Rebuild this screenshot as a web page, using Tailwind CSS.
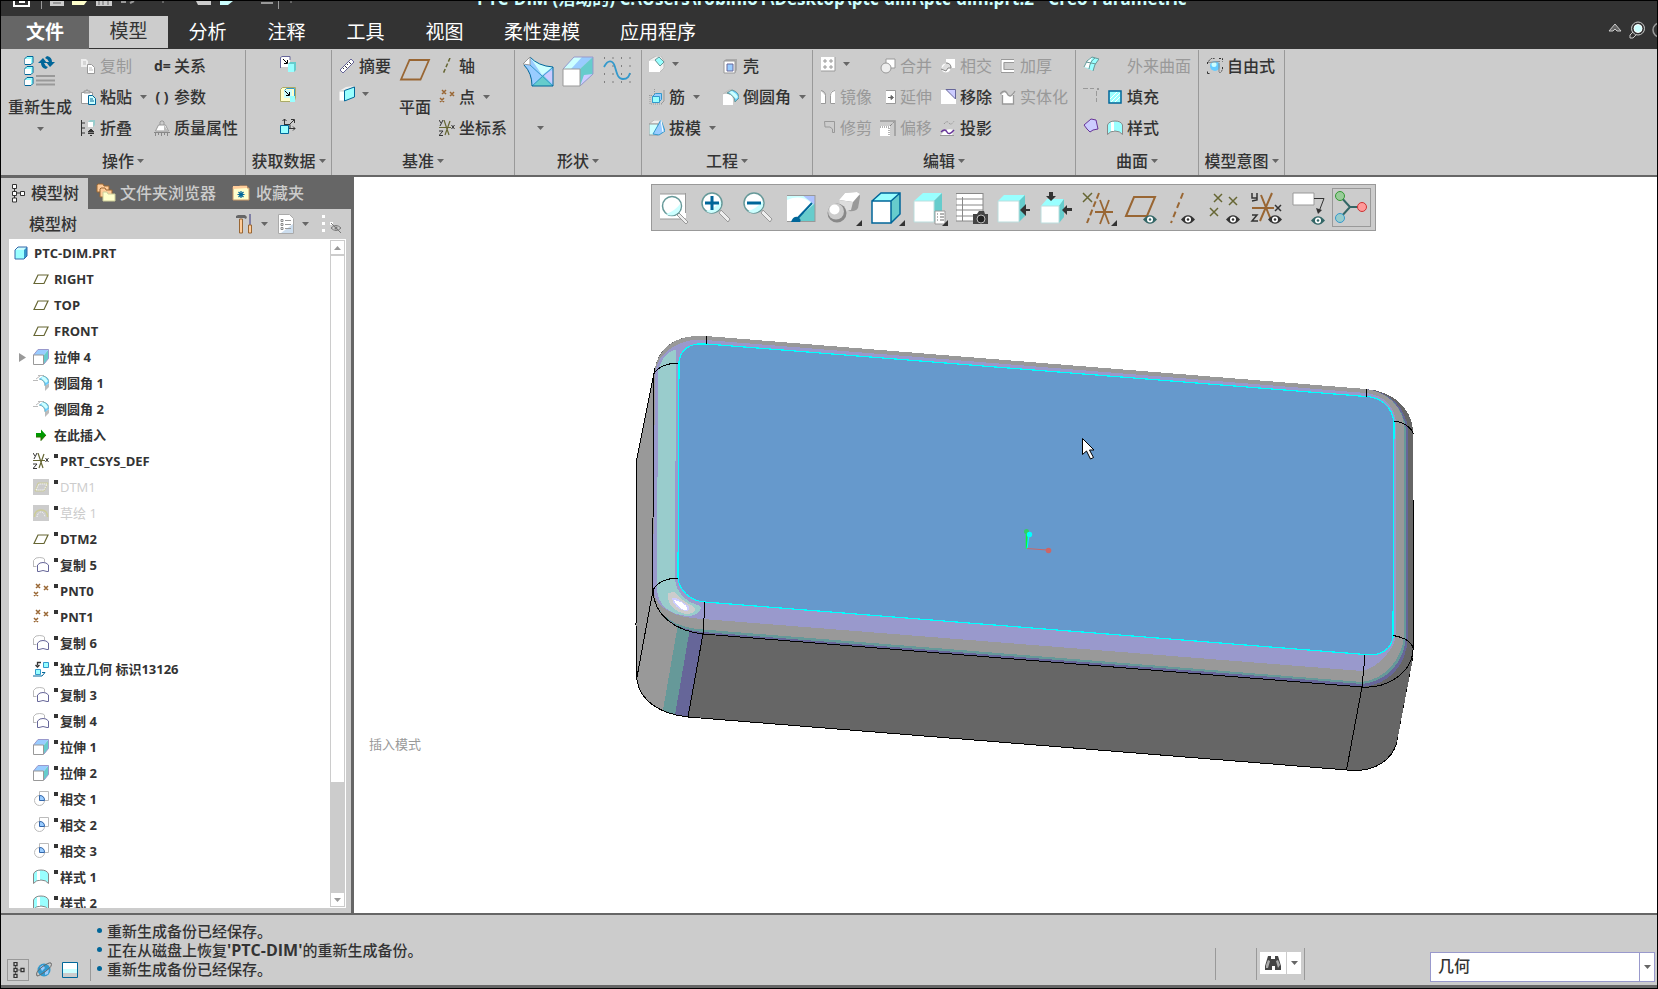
<!DOCTYPE html>
<html lang="zh-CN">
<head>
    <meta charset="UTF-8">
    <meta name="viewport" content="width=device-width, initial-scale=1.0">
    <title>PTC-DIM - Creo Parametric</title>
    <script src="https://cdn.jsdelivr.net/npm/@tailwindcss/browser@4"></script>
</head>
<body class="flex h-screen flex-col overflow-hidden bg-black p-px font-['Open_Sans','Noto_Sans_CJK_SC',sans-serif] text-base font-medium leading-6 text-[#333]">

    <!-- Icon library -->
    <svg class="hidden" xmlns="http://www.w3.org/2000/svg">
        <symbol id="caret" viewBox="0 0 7 4"><path d="M0 0h7L3.500 4z" fill="#666"/></symbol>
        <symbol id="eye" viewBox="0 0 14 9"><path d="M0 4.500Q7-4 14 4.500Q7 13 0 4.500z" fill="currentColor"/><circle cx="7" cy="4.500" r="3" fill="#fff"/><circle cx="7" cy="4.500" r="1.300" fill="currentColor"/></symbol>

        <symbol id="regen" viewBox="0 0 32 32">
            <g stroke="#069" fill="#9ff"><path d="M1 3.500l2-2h6v6l-2 2H1z"/><path d="M1 13.500l2-2h6v6l-2 2H1z"/><path d="M1 24.500l2-2h6v6l-2 2H1z"/></g>
            <path d="M1 4h6v5H1zM1 14h6v5H1zM1 25h6v5H1z" fill="#fff"/>
            <path d="M12 21h19M12 25.500h19M12 29.500h19" stroke="#999" stroke-width="2"/>
            <path d="M14 8l5-5 4 5h-3q1 3 4 4l-2 2q-5-1-5-6zM31 7l-5 5-4-5h3q-1-3-4-4l2-2q5 1 5 6z" fill="#069"/>
        </symbol>
        <symbol id="copy" viewBox="0 0 16 16"><path d="M1 1h5l2 2v6H1z" fill="#eee"/><path d="M3 4h3M3 6h3" stroke="#bbb"/><path d="M7.500 6.500h4l3 3v6h-7z" fill="#fff" stroke="#999"/><path d="M9 10h3M9 12h4" stroke="#bbb"/></symbol>
        <symbol id="paste" viewBox="0 0 16 16"><path d="M1.500 3.500h11v11h-11z" fill="#fff" stroke="#999"/><path d="M4 4V2h2l1-1.500L8 2h2v2z" fill="#ccc" stroke="#999"/><path d="M8.500 6.500h4l3 3v6h-7z" fill="#cff" stroke="#069"/><path d="M10 10h3M10 12h4" stroke="#069"/></symbol>
        <symbol id="collapse" viewBox="0 0 16 16"><path d="M1.500 0v16M2 3h3M2 8h3M2 13h3" stroke="#333"/><path d="M8 2l2-2h5v5l-2 2H8z" fill="#9cc"/><path d="M8 2h5v5H8z" fill="#fff"/><path d="M11 9l3 3H8zM8 13.500h6M10 15.500h2" fill="#333" stroke="#333"/></symbol>
        <symbol id="mass" viewBox="0 0 16 16"><path d="M1.500 11l3-6h7l3 6z" fill="#fff" stroke="#999"/><path d="M6 5V2l1-1h2l1 1v3" fill="none" stroke="#999"/><path d="M10 5l4 6h-4z" fill="#bbb"/><path d="M0 12.500h16M1.500 13v3M4.500 13v2M7.500 13v3M10.500 13v2M13.500 13v3" stroke="#888"/></symbol>
        <symbol id="userdef" viewBox="0 0 16 16"><path d="M1 1l1-1h8v9l-2 2H1z" fill="#fff"/><path d="M.5 12V1.500L2 .5h8V4" fill="none" stroke="#669"/><path d="M3 3l4 4M7.500 4v3.500H4" stroke="#000" fill="none"/><path d="M8 8l2-2h6v8l-2 2z" fill="#6cc"/><path d="M8 8h6v8H8z" fill="#9ff"/></symbol>
        <symbol id="copygeom" viewBox="0 0 16 16"><path d="M.5 2.500l2-2h13v11l-2 3H.5z" fill="#ffc" stroke="#aa6"/><path d="M4 3h8v8H4z" fill="#cff"/><path d="M4.500 3.500l2-2h8v9" fill="none" stroke="#39c"/><path d="M5 4l4 4M9.500 5v3.500H6" stroke="#000" fill="none"/><path d="M10 9h5v6h-5z" fill="#9ff"/></symbol>
        <symbol id="shrink" viewBox="0 0 16 16"><path d="M.5 7.500h8v8h-8z" fill="#9ff" stroke="#069"/><path d="M4.500 7V1M2.500 3l2-2 2 2M9 7l5-5M11 1.500h3.500V5M9 10.500h6M13 8.500l2 2-2 2M4 6.500h6v4" stroke="#333" fill="none"/></symbol>
        <symbol id="ruler" viewBox="0 0 16 16"><path d="M1 12L12 1l3 3L4 15z" fill="#fff" stroke="#669"/><path d="M4 10l1 1M6 8l2 2M8 6l1 1M10 4l2 2" stroke="#333"/></symbol>
        <symbol id="boxface" viewBox="0 0 16 16"><path d="M0 5l7-4 8-1-7 4z" fill="#eee"/><path d="M0 5h6v10H0z" fill="#fff" stroke="#ccc"/><path d="M5.500 4.500l10-3.500v10l-10 4z" fill="#9ff" stroke="#069"/></symbol>
        <symbol id="plane" viewBox="0 0 32 32"><path d="M2 25.500L10.500 6H30L21.500 25.500z" fill="none" stroke="#963" stroke-width="1.800"/></symbol>
        <symbol id="axis" viewBox="0 0 16 16"><path d="M11 0L4 16" stroke="#663" stroke-width="1.500" stroke-dasharray="4 2"/></symbol>
        <symbol id="points" viewBox="0 0 16 16"><path d="M3 1l4 4M7 1L3 5M11 3l4 4M15 3l-4 4M1 9l4 4M5 9l-4 4" stroke="currentColor" stroke-width="1.500"/></symbol>
        <symbol id="csys" viewBox="0 0 16 16"><path d="M0 7.500h12M5 0l5 15M11 1L6 15" stroke="#663" stroke-width="1.200"/><path d="M0 0l2 3M4 0L1 6M0 11h4l-4 4.500h4M12.500 5l3 4M15.500 5l-3 4" fill="none" stroke="#333"/></symbol>
        <symbol id="blend" viewBox="0 0 32 32"><path d="M8 1q8 9 23 10v19H10Q10 17 2 9z" fill="#9cf"/><path d="M8 1q8 9 23 10L20 19z" fill="#cff"/><path d="M10 30l11-11 10 11z" fill="#6cc"/><path d="M21 19l10-5v14z" fill="#ccf"/><path d="M8 9l23 21M10 30L31 11" stroke="#39c"/><path d="M8 1q8 9 23 10v19H10Q10 17 2 9" fill="none" stroke="#069"/><path d="M1 8l7-7v8z" fill="#fff" stroke="#999"/></symbol>
        <symbol id="extrude" viewBox="0 0 32 32"><path d="M1 13L12 1h19L18 13z" fill="#9cf"/><path d="M1 13L12 1h8L9 13z" fill="#cff"/><path d="M18 13L31 1v17L18 30z" fill="#6cc"/><path d="M18 30l4-11 9-1z" fill="#ccf"/><path d="M1 13L12 1h19v17L18 30" fill="none" stroke="#99c"/><path d="M1 13h17v17H1z" fill="#fff" stroke="#999"/></symbol>
        <symbol id="extrudeitem" viewBox="0 0 16 16"><path d="M.5 6L5 .5h10.500L11 6z" fill="#9cf"/><path d="M11 6l4.500-5.500v9L11 15z" fill="#6cc"/><path d="M.5 6L5 .5h10.500v9L11 15" fill="none" stroke="#99c"/><path d="M.5 6h10v9.500H.5z" fill="#fff" stroke="#999"/></symbol>
        <symbol id="sketch" viewBox="0 0 32 32"><path d="M2 2h28M2 10h28M2 18h28M2 26h28" stroke="#333" stroke-dasharray="1 7.500"/><path d="M2 11c4-8 9-7 11 0s3 12 8 12 6-3 7-6" fill="none" stroke="#39c" stroke-width="1.800"/></symbol>
        <symbol id="chamfer" viewBox="0 0 16 16"><path d="M0 4l7-4h5l3 5v7l-4 4H0z" fill="#eee" stroke="#bbb"/><path d="M0 5h6l5 5v6H0z" fill="#fff"/><path d="M6 4l4-3 5 5-4 4z" fill="#9ff" stroke="#699"/></symbol>
        <symbol id="rib" viewBox="0 0 16 16"><path d="M5.500 0v6M0 6.500h5M1 6v9h12" fill="none" stroke="#999" stroke-dasharray="1 1"/><path d="M3.500 7.500l3-3h6v6l-3 3h-6z" fill="#9cf" stroke="#39c"/><path d="M3.500 7.500h7v6h-7z" fill="#9ff" stroke="#39c"/><path d="M15 1v11l-3 3" fill="none" stroke="#999"/></symbol>
        <symbol id="draft" viewBox="0 0 16 16"><path d="M0 4l5-4h7L9 4z" fill="#eee" stroke="#bbb"/><path d="M0 4h9v11H0z" fill="#cff" stroke="#999"/><path d="M8 7l4-7 4 11-6 4-6-1z" fill="#9cf" stroke="#39c"/><path d="M12 0l2 12" stroke="#fff"/></symbol>
        <symbol id="shell" viewBox="0 0 16 16"><path d="M1 3l2-2h11v11l-2 3z" fill="#aaa"/><path d="M1 3h11v12H1z" fill="#fff" stroke="#999"/><path d="M4 6h6v7H4z" fill="#9cf" stroke="#669"/></symbol>
        <symbol id="round" viewBox="0 0 16 16"><path d="M0 5h5q5 1 5 6v5H0z" fill="#fff"/><path d="M0 5l6-4h4" fill="none" stroke="#bbb"/><path d="M4 4l5-3q7 2 7 8l-4 4q0-7-8-9z" fill="#6cf" stroke="#699"/><path d="M6 3l3-1q4 2 6 6l-2 2z" fill="#cff"/></symbol>
        <symbol id="rounditem" viewBox="0 0 16 16"><path d="M0 5.500h5M5 .5h6M3 4l4-3" stroke="#bbb"/><path d="M12 11l4-3v4l-4 4z" fill="#bbb"/><path d="M6 4l4-3q6 1 6 7l-4 3q0-6-6-7z" fill="#6cf"/><path d="M8 3l2-2q3 1 5 5l-2 2z" fill="#cff"/><path d="M6 4q6 1 6 7M10 1q6 1 6 7" fill="none" stroke="#699" stroke-width=".7"/></symbol>
        <symbol id="pattern" viewBox="0 0 16 16"><path d="M1 1h14v14H1z" fill="#fff"/><path d="M15 1v14H1" fill="none" stroke="#999"/><path d="M4 4h2v2H4zM10 4h2v2h-2zM4 10h2v2H4zM10 10h2v2h-2z" fill="none" stroke="#999"/></symbol>
        <symbol id="mirror" viewBox="0 0 16 16"><path d="M1 2l4 4v9H1z" fill="#fff"/><path d="M1 1.500q4.500 1 4.500 5v8H1" fill="none" stroke="#999"/><path d="M15 1q-5 1-5 5v9h5z" fill="#fff"/><path d="M15 1.500q-4.500 1-4.500 5v8H15" fill="none" stroke="#999"/></symbol>
        <symbol id="trim" viewBox="0 0 16 16"><path d="M4.500 1.500h10v11h-2V9L10 7H5z" fill="#ccc" stroke="#999"/></symbol>
        <symbol id="merge" viewBox="0 0 16 16"><path d="M6 1h9v9H6z" fill="#fff" stroke="#999"/><circle cx="6" cy="10" r="5" fill="#eee" stroke="#999"/></symbol>
        <symbol id="extend" viewBox="0 0 16 16"><path d="M6 2h9v13H6z" fill="#fff"/><path d="M6 1.500h9.500v13H6" fill="none" stroke="#999"/><path d="M8 8.500h4M11 6.500l2.500 2L11 10.500z" fill="#666" stroke="#666"/></symbol>
        <symbol id="offset" viewBox="0 0 16 16"><path d="M0 1h15v15" fill="none" stroke="#999" stroke-width="1.500"/><path d="M0 6h10v10H0z" fill="#fff"/><path d="M0 7h9v9M10 6l4-4" fill="none" stroke="#666" stroke-dasharray="1 1"/></symbol>
        <symbol id="intersect" viewBox="0 0 16 16"><path d="M6 1h9v9H6z" fill="#fff"/><circle cx="6" cy="10" r="5" fill="#fff" stroke="#ccc"/><path d="M6 5q5 0 5 5H8l-2 3-5-2" fill="#ddd" stroke="#888"/></symbol>
        <symbol id="remove" viewBox="0 0 16 16"><path d="M1 1h9l6 8v6H1z" fill="#fff"/><path d="M6 .5h9.500V10z" fill="#ccf" stroke="#669"/></symbol>
        <symbol id="project" viewBox="0 0 16 16"><path d="M4 4q3-4 5-1t5-2" fill="none" stroke="#999" stroke-dasharray="2 1"/><path d="M1 15q5-8 13-5l-2 5z" fill="#fff"/><path d="M0 15.500h14" stroke="#999"/><path d="M1 12q4-4 6 0t7-2" fill="none" stroke="#639" stroke-width="1.500"/></symbol>
        <symbol id="thicken" viewBox="0 0 16 16"><path d="M14 2.500H2v11h12" fill="#ccc" stroke="#fff" stroke-width="3"/><path d="M14 1.500H1v13h13M14 4.500H4v7h10" fill="none" stroke="#999"/></symbol>
        <symbol id="solidify" viewBox="0 0 16 16"><path d="M2 5q4-4 6 1 2 4 6-1v10H2z" fill="#fff"/><path d="M0 5q5-6 8 1 3 3 7-4M2.500 6v9h11V6" fill="none" stroke="#999" stroke-width="1.300"/></symbol>
        <symbol id="boundary" viewBox="0 0 16 16"><path d="M1 11q2-7 8-10l7 2q-5 5-6 12z" fill="#9ff"/><path d="M1 11q2-7 8-10l-3 11z" fill="#fff"/><path d="M1 11q2-7 8-10l7 2q-5 5-6 12M3 6l10 2M6 13q1-8 6-11" fill="none" stroke="#699"/></symbol>
        <symbol id="corner" viewBox="0 0 16 16"><path d="M0 1.500h11M13.500 4v11" stroke="#999" stroke-dasharray="5 2"/><path d="M14 1h2v2h-2z" fill="#999"/></symbol>
        <symbol id="polygon" viewBox="0 0 16 16"><path d="M1 7l7-6 5 1 2 9-5 1-3 2-3-3z" fill="#ccf" stroke="#639"/></symbol>
        <symbol id="fill" viewBox="0 0 16 16"><path d="M2 2h12v12H2z" fill="#9ff" stroke="#069" stroke-width="1.500"/><path d="M3 10l7-7M4 13l9-9M8 13l5-5" stroke="#fff"/></symbol>
        <symbol id="style" viewBox="0 0 16 16"><path d="M.5 14.500V5Q2 1 8 1t7.500 4v9.500Q13 11 8 11T.5 14.500z" fill="#9ff" stroke="#888"/><path d="M4 2h3v9H4z" fill="#fff"/></symbol>
        <symbol id="freestyle" viewBox="0 0 16 16"><circle cx="8" cy="8" r="5" fill="#6cf"/><circle cx="7" cy="6.500" r="2.500" fill="#cff"/><path d="M.5 15.500h3M.5 15.500v-3M.5 6V4l4-3.500h3M12 .5h3.500v3M15.500 9v3l-3 3" fill="none" stroke="#333" stroke-dasharray="2 1"/><path d="M1 4.500l12-1M12 5v9" stroke="#888"/></symbol>

        <symbol id="treetab" viewBox="0 0 14 20"><path d="M3.500 5v3M3.500 12v3M6 10h4" stroke="#333"/><path d="M1.500 1.500h4v4h-4zM1.500 8.500h4v4h-4zM1.500 15h4v4h-4zM9.500 8.500h4v4h-4z" fill="#fff" stroke="#333"/></symbol>
        <symbol id="treesmall" viewBox="0 0 13 16"><path d="M3.500 4v2M3.500 10v2M5 8h4" stroke="#666"/><path d="M2 .5h3v3H2zM2 6.500h3v3H2zM2 12.500h3v3H2zM9 6.500h3v3H9z" fill="#fff" stroke="#333" stroke-width="1.300"/></symbol>
        <symbol id="folders" viewBox="0 0 20 20"><g stroke="#963" fill="#fc9"><path d="M1 9V2l1-1h5l1 2h5v6z"/><path d="M4 14V6l1-1h4l1 2h6v7z"/></g><path d="M7 18v-9h4l1 2h7v7z" fill="#ffc" stroke="#cc9"/></symbol>
        <symbol id="favs" viewBox="0 0 18 18"><path d="M1 16V3h5l2-1h7v2h2v12z" fill="#ffc" stroke="#c96"/><path d="M1 5V2h14v2" fill="#fc9"/><path d="M9 7v7M5.500 10.500h7M6.500 8l5 5M11.500 8l-5 5" stroke="#069" stroke-width="1.200"/></symbol>
        <symbol id="tools" viewBox="0 0 18 20"><path d="M1 2l2-1h7l2 2-1 2-2-1H1z" fill="#666"/><path d="M4.500 5h3v14h-3z" fill="#fc9" stroke="#963"/><path d="M15 0v11" stroke="#669" stroke-width="1.500"/><path d="M13.500 11h3v8h-3z" fill="#fc9" stroke="#963"/></symbol>
        <symbol id="listdoc" viewBox="0 0 16 20"><path d="M.5.500h11l4 4v15H.5z" fill="#fff" stroke="#aaa"/><path d="M3 19l12-9v9z" fill="#cde"/><path d="M7 6.500h6M7 10.500h6M7 14.500h6" stroke="#999"/><path d="M3 5.500h2v2H3zM3 9.500h2v2H3zM3 13.500h2v2H3z" fill="none" stroke="#888"/></symbol>
        <symbol id="filter" viewBox="0 0 20 20"><path d="M1 1h3v3H1zM1 8h3v3H1zM1 15h3v3H1zM9 8h3v3H9z" fill="#fff"/><path d="M10 14q5-5 10 0-5 5-10 0zM10 9l10 10" fill="none" stroke="#777"/><circle cx="15" cy="14" r="1.500" fill="#777"/></symbol>

        <symbol id="part" viewBox="0 0 14 14"><path d="M1 4l3-3h9v9l-3 3z" fill="#39c"/><path d="M1 4l3-3h9l-3 3z" fill="#cff"/><path d="M1 4h9v9H1z" fill="#9ff"/><path d="M1 4l3-3h9v9l-3 3H1z" fill="none" stroke="#36a"/></symbol>
        <symbol id="datum" viewBox="0 0 16 16"><path d="M1 12.500L5 4h10l-4 8.500z" fill="none" stroke="#663" stroke-width="1.200"/></symbol>
        <symbol id="insert" viewBox="0 0 16 16"><path d="M3 6h5V2.500L13 8l-5 5.500V10H3z" fill="#090"/><path d="M3 10h5v3.500L13 8" fill="none" stroke="#360"/></symbol>
        <symbol id="datumhid" viewBox="0 0 16 16"><path d="M0 0h16v16H0z" fill="#ccc"/><path d="M2 12L5 4h10l-4 8z" fill="none" stroke="#cc9"/><path d="M3 11L6 5h8l-3 6z" fill="none" stroke="#fff" stroke-dasharray="1 1"/></symbol>
        <symbol id="sketchhid" viewBox="0 0 16 16"><path d="M0 0h16v16H0z" fill="#ccc"/><path d="M1.500 12q0-7 6.500-7t6.500 7" fill="none" stroke="#cc9" stroke-width="1.500"/><path d="M4 12q1-5 4-5t4 5" fill="none" stroke="#fff" stroke-dasharray="1 1"/></symbol>
        <symbol id="copyitem" viewBox="0 0 16 16"><path d="M.5 10V3.500L3 1q4-1 7 0l1.500 1v3M.5 9.500h3" fill="none" stroke="#bbb"/><path d="M4.500 14.500V8L7 6q3-1 6 0l2.500 2v6.500H14q-4-2-8 0z" fill="#fff" stroke="#669"/></symbol>
        <symbol id="indep" viewBox="0 0 16 16"><path d="M10.500 1.500h5v5h-5z" fill="#9ff" stroke="#39c"/><path d="M8 1.500H4.500v3M2.500 4l2 2 2-2" fill="none" stroke="#333" stroke-width="1.300"/><path d="M2.500 8.500h5v5h-5z" fill="#9ff" stroke="#39c"/><path d="M0 15h9l3-3.500H9" fill="none" stroke="#069"/></symbol>
        <symbol id="intitem" viewBox="0 0 16 16"><path d="M6.500.500h9v9h-9z" fill="#fff" stroke="#bbb"/><circle cx="6.500" cy="9.500" r="5" fill="#fff" stroke="#bbb"/><path d="M6.500 4.500q5 0 5 5h-5z" fill="#9cf" stroke="#36a"/></symbol>

        <symbol id="lens" viewBox="0 0 40 34"><path d="M23 19l9 9-2 3-9-9z" fill="#eee" stroke="#999"/><circle cx="14" cy="12" r="10" fill="#fff" stroke="#699" stroke-width="1.500"/><path d="M8 20q8-2 15-10 1 7-4 10-6 4-11 0z" fill="#cff"/></symbol>
    </svg>

    <!-- Title bar and ribbon tabs -->
    <header class="flex h-12 shrink-0 flex-col bg-[#333] text-white">
        <div class="relative flex h-2 shrink-0 items-end overflow-hidden pl-[476px]">
            <svg class="absolute top-0 left-0 h-2 w-[300px]" viewBox="0 0 300 8">
                <path d="M13 0v5h15V0" fill="none" stroke="#fff" stroke-width="2"/><path d="M18 1h6" stroke="#fff" stroke-width="2"/><path d="M40.500 0v10M277.500 0v10" stroke="#999"/>
                <path d="M49 0h14v5H49zM95 0h16v5H95z" fill="#ccc"/><path d="M71 0h15l-3 4H71z" fill="#ffc"/><path d="M98 0v4M102 0v4M107 0v4M52 2h8" stroke="#666"/><path d="M195 0h15v4h-13z" fill="#ccc"/><path d="M219 4h8l5-4h-13z" fill="#cff"/><path d="M120 1h5M129 2l4-2M260 2h12" stroke="#999" stroke-width="2" fill="none"/><path d="M161 1h2M289 1h2" stroke="#999"/>
            </svg>
            <h1 class="whitespace-nowrap text-[17px] leading-5 font-bold text-[#cff]">PTC-DIM (活动的) C:\Users\robinlo1\Desktop\ptc-dim\ptc-dim.prt.2 - Creo Parametric</h1>
        </div>
        <div class="mt-[7px] flex h-[33px] items-stretch text-[19px] font-normal">
            <nav class="flex">
                <button class="w-[88px] bg-[#666] pb-0.5 font-bold">文件</button>
                <button class="mb-px w-[79px] bg-[#ccc] pb-0.5 text-[#333]">模型</button>
                <button class="w-[79px] pb-0.5">分析</button>
                <button class="w-[79px] pb-0.5">注释</button>
                <button class="w-[79px] pb-0.5">工具</button>
                <button class="w-[79px] pb-0.5">视图</button>
                <button class="px-5 pb-0.5">柔性建模</button>
                <button class="px-5 pb-0.5">应用程序</button>
            </nav>
            <div class="ml-auto flex items-center gap-[7px] overflow-hidden pb-1.5">
                <button class="pb-1" aria-label="折叠功能区"><svg class="h-2.5 w-3.5" viewBox="0 0 14 10"><path d="M1 8l6-7 6 7H9L7 6 5 8z" fill="#666" stroke="#ccc"/></svg></button>
                <button aria-label="搜索"><svg class="h-[18px] w-4" viewBox="0 0 16 18"><path d="M1 17v-3l4-4 3 3-4 4z" fill="#333" stroke="#ccc"/><circle cx="9" cy="7.500" r="6.500" fill="#333" stroke="#ccc"/><circle cx="9" cy="7.500" r="4" fill="#cff" stroke="#fff"/></svg></button>
                <button aria-label="帮助"><svg class="h-4 w-[5px]" viewBox="0 0 5 16"><circle cx="8" cy="8" r="7" fill="none" stroke="#999" stroke-width="1.500"/></svg></button>
            </div>
        </div>
    </header>

    <!-- Ribbon -->
    <section class="flex h-32 shrink-0 overflow-hidden border-b-2 border-[#666] bg-[#ccc] pt-px whitespace-nowrap">
        <div class="flex w-[245px] shrink-0 flex-col border-r border-[#999]">
            <div class="flex h-24 pl-[7px]">
                <button class="flex w-16 flex-col items-center pt-[5px]"><svg class="size-8"><use href="#regen"/></svg><span class="mt-2">重新生成</span><svg class="mt-2 h-1 w-[7px]"><use href="#caret"/></svg></button>
                <div class="ml-2 flex w-[74px] flex-col">
                    <button disabled class="flex h-[31px] items-center gap-1 font-normal text-[#999]"><svg class="size-4"><use href="#copy"/></svg>复制</button>
                    <button class="flex h-[31px] items-center gap-1"><svg class="size-4"><use href="#paste"/></svg>粘贴<svg class="ml-1 h-1 w-[7px]"><use href="#caret"/></svg></button>
                    <button class="flex h-[31px] items-center gap-1"><svg class="size-4"><use href="#collapse"/></svg>折叠</button>
                </div>
                <div class="flex flex-col">
                    <button class="flex h-[31px] items-center gap-1"><span class="w-4 text-sm font-bold">d=</span>关系</button>
                    <button class="flex h-[31px] items-center gap-1"><span class="w-4 text-center text-sm font-bold">( )</span>参数</button>
                    <button class="flex h-[31px] items-center gap-1"><svg class="size-4"><use href="#mass"/></svg>质量属性</button>
                </div>
            </div>
            <button class="flex flex-1 items-center justify-center gap-[3px]">操作<svg class="h-1 w-[7px]"><use href="#caret"/></svg></button>
        </div>

        <div class="flex w-[86px] shrink-0 flex-col border-r border-[#999]">
            <div class="flex h-24 flex-col items-center pr-0.5">
                <button class="flex h-[31px] items-center pb-1" aria-label="用户定义特征"><svg class="size-4"><use href="#userdef"/></svg></button>
                <button class="flex h-[31px] items-center pb-1" aria-label="复制几何"><svg class="size-4"><use href="#copygeom"/></svg></button>
                <button class="flex h-[31px] items-center pb-1" aria-label="收缩包络"><svg class="size-4"><use href="#shrink"/></svg></button>
            </div>
            <button class="flex flex-1 items-center justify-center gap-[3px]">获取数据<svg class="h-1 w-[7px]"><use href="#caret"/></svg></button>
        </div>

        <div class="flex w-[183px] shrink-0 flex-col border-r border-[#999]">
            <div class="flex h-24 pl-[7px]">
                <div class="flex w-[60px] flex-col">
                    <button class="flex h-[31px] items-center gap-1"><svg class="size-4"><use href="#ruler"/></svg>摘要</button>
                    <button class="flex h-[26px] items-center gap-[7px]" aria-label="带"><svg class="size-4"><use href="#boxface"/></svg><svg class="h-1 w-[7px]"><use href="#caret"/></svg></button>
                </div>
                <button class="flex w-8 flex-col items-center pt-1"><svg class="size-8"><use href="#plane"/></svg><span class="mt-[9px]">平面</span></button>
                <div class="ml-2 flex flex-col">
                    <button class="flex h-[31px] items-center gap-1"><svg class="size-4"><use href="#axis"/></svg>轴</button>
                    <button class="flex h-[31px] items-center gap-1"><svg class="size-4 text-[#963]"><use href="#points"/></svg>点<svg class="ml-1 h-1 w-[7px]"><use href="#caret"/></svg></button>
                    <button class="flex h-[31px] items-center gap-1"><svg class="size-4"><use href="#csys"/></svg>坐标系</button>
                </div>
            </div>
            <button class="flex flex-1 items-center justify-center gap-[3px]">基准<svg class="h-1 w-[7px]"><use href="#caret"/></svg></button>
        </div>

        <div class="flex w-[127px] shrink-0 flex-col border-r border-[#999]">
            <div class="flex h-24 items-start gap-2 pt-1.5 pl-[7px]">
                <button class="flex flex-col items-center" aria-label="边界混合"><svg class="size-8"><use href="#blend"/></svg><svg class="mt-[38px] ml-1 h-1 w-[7px]"><use href="#caret"/></svg></button>
                <button aria-label="拉伸"><svg class="size-8"><use href="#extrude"/></svg></button>
                <button aria-label="草绘"><svg class="size-8"><use href="#sketch"/></svg></button>
            </div>
            <button class="flex flex-1 items-center justify-center gap-[3px]">形状<svg class="h-1 w-[7px]"><use href="#caret"/></svg></button>
        </div>

        <div class="flex w-[171px] shrink-0 flex-col border-r border-[#999]">
            <div class="flex h-24 pl-[7px]">
                <div class="flex w-[74px] flex-col">
                    <button class="flex h-[31px] items-center gap-[7px] pb-1" aria-label="倒角"><svg class="size-4"><use href="#chamfer"/></svg><svg class="h-1 w-[7px]"><use href="#caret"/></svg></button>
                    <button class="flex h-[31px] items-center gap-1"><svg class="size-4"><use href="#rib"/></svg>筋<svg class="ml-1 h-1 w-[7px]"><use href="#caret"/></svg></button>
                    <button class="flex h-[31px] items-center gap-1"><svg class="size-4"><use href="#draft"/></svg>拔模<svg class="ml-1 h-1 w-[7px]"><use href="#caret"/></svg></button>
                </div>
                <div class="flex flex-col">
                    <button class="flex h-[31px] items-center gap-1"><svg class="size-4"><use href="#shell"/></svg>壳</button>
                    <button class="flex h-[31px] items-center gap-1"><svg class="size-4"><use href="#round"/></svg>倒圆角<svg class="ml-1 h-1 w-[7px]"><use href="#caret"/></svg></button>
                </div>
            </div>
            <button class="flex flex-1 items-center justify-center gap-[3px]">工程<svg class="h-1 w-[7px]"><use href="#caret"/></svg></button>
        </div>

        <div class="flex w-[263px] shrink-0 flex-col border-r border-[#999]">
            <div class="flex h-24 gap-2 pl-[7px] font-normal text-[#999]">
                <div class="flex flex-col">
                    <button class="flex h-[31px] items-center gap-[7px] pb-1" aria-label="阵列"><svg class="size-4"><use href="#pattern"/></svg><svg class="h-1 w-[7px]"><use href="#caret"/></svg></button>
                    <button disabled class="flex h-[31px] items-center gap-1"><svg class="size-4"><use href="#mirror"/></svg>镜像</button>
                    <button disabled class="flex h-[31px] items-center gap-1"><svg class="size-4"><use href="#trim"/></svg>修剪</button>
                </div>
                <div class="flex flex-col">
                    <button disabled class="flex h-[31px] items-center gap-1"><svg class="size-4"><use href="#merge"/></svg>合并</button>
                    <button disabled class="flex h-[31px] items-center gap-1"><svg class="size-4"><use href="#extend"/></svg>延伸</button>
                    <button disabled class="flex h-[31px] items-center gap-1"><svg class="size-4"><use href="#offset"/></svg>偏移</button>
                </div>
                <div class="flex flex-col">
                    <button disabled class="flex h-[31px] items-center gap-1"><svg class="size-4"><use href="#intersect"/></svg>相交</button>
                    <button class="flex h-[31px] items-center gap-1 font-medium text-[#333]"><svg class="size-4"><use href="#remove"/></svg>移除</button>
                    <button class="flex h-[31px] items-center gap-1 font-medium text-[#333]"><svg class="size-4"><use href="#project"/></svg>投影</button>
                </div>
                <div class="flex flex-col">
                    <button disabled class="flex h-[31px] items-center gap-1"><svg class="size-4"><use href="#thicken"/></svg>加厚</button>
                    <button disabled class="flex h-[31px] items-center gap-1"><svg class="size-4"><use href="#solidify"/></svg>实体化</button>
                </div>
            </div>
            <button class="flex flex-1 items-center justify-center gap-[3px]">编辑<svg class="h-1 w-[7px]"><use href="#caret"/></svg></button>
        </div>

        <div class="flex w-[123px] shrink-0 flex-col border-r border-[#999]">
            <div class="flex h-24 gap-2 pl-[7px]">
                <div class="flex flex-col">
                    <button class="flex h-[31px] items-center pb-1" aria-label="边界混合"><svg class="size-4"><use href="#boundary"/></svg></button>
                    <button class="flex h-[31px] items-center pb-1" aria-label="顶点倒圆角"><svg class="size-4"><use href="#corner"/></svg></button>
                    <button class="flex h-[31px] items-center pb-1" aria-label="自由曲面"><svg class="size-4"><use href="#polygon"/></svg></button>
                </div>
                <div class="flex flex-col">
                    <button disabled class="flex h-[31px] items-center pl-5 font-normal text-[#999]">外来曲面</button>
                    <button class="flex h-[31px] items-center gap-1"><svg class="size-4"><use href="#fill"/></svg>填充</button>
                    <button class="flex h-[31px] items-center gap-1"><svg class="size-4"><use href="#style"/></svg>样式</button>
                </div>
            </div>
            <button class="flex flex-1 items-center justify-center gap-[3px]">曲面<svg class="h-1 w-[7px]"><use href="#caret"/></svg></button>
        </div>

        <div class="flex w-[86px] shrink-0 flex-col border-r border-[#999]">
            <div class="flex h-24 flex-col pl-2">
                <button class="flex h-[31px] items-center gap-1"><svg class="size-4"><use href="#freestyle"/></svg>自由式</button>
            </div>
            <button class="flex flex-1 items-center justify-center gap-[3px]">模型意图<svg class="h-1 w-[7px]"><use href="#caret"/></svg></button>
        </div>
    </section>

    <div class="flex min-h-0 flex-1">
        <!-- Navigator -->
        <aside class="flex w-[353px] shrink-0 flex-col border-r-[3px] border-[#666] bg-[#ccc]">
            <nav class="flex h-8 shrink-0 bg-[#666] pt-px whitespace-nowrap text-[#ccc]">
                <button class="flex w-[87px] items-center gap-1.5 bg-[#ccc] pb-0.5 pl-2.5 text-[#333]"><svg class="h-5 w-3.5"><use href="#treetab"/></svg>模型树</button>
                <button class="ml-2 flex items-center gap-1 pb-0.5"><svg class="size-5"><use href="#folders"/></svg>文件夹浏览器</button>
                <button class="ml-4 flex items-center gap-1.5 pb-0.5"><svg class="size-[18px]"><use href="#favs"/></svg>收藏夹</button>
            </nav>
            <div class="flex h-[30px] shrink-0 items-center pr-2.5 pl-7">
                <h2>模型树</h2>
                <button class="ml-auto flex items-center gap-2" aria-label="设置"><svg class="h-5 w-[18px]"><use href="#tools"/></svg><svg class="h-1 w-[7px]"><use href="#caret"/></svg></button>
                <button class="ml-2.5 flex items-center gap-2" aria-label="显示"><svg class="h-5 w-4"><use href="#listdoc"/></svg><svg class="h-1 w-[7px]"><use href="#caret"/></svg></button>
                <button class="ml-3" aria-label="过滤"><svg class="size-5"><use href="#filter"/></svg></button>
            </div>
            <div class="mr-[5px] mb-[5px] ml-2 flex min-h-0 flex-1 overflow-hidden bg-white p-px">
                <ul id="model-tree" class="min-w-0 flex-1 text-[13px] font-bold"></ul>
                <div class="flex w-[15px] flex-col border border-[#ccc]">
                    <button class="flex h-[15px] shrink-0 items-center justify-center border-b-2 border-[#ccc]" aria-label="向上滚动"><svg class="h-1 w-[7px]" viewBox="0 0 7 4"><path d="M0 4h7L3.500 0z" fill="#999"/></svg></button>
                    <div class="flex min-h-0 flex-1 items-end"><div class="h-[17.500%] w-full bg-[#ccc]"></div></div>
                    <button class="flex h-[13px] shrink-0 items-center justify-center" aria-label="向下滚动"><svg class="h-1 w-[7px]" viewBox="0 0 7 4"><path d="M0 0h7L3.500 4z" fill="#999"/></svg></button>
                </div>
            </div>
        </aside>

        <!-- Graphics window -->
        <main class="relative min-w-0 flex-1 overflow-hidden bg-white">
            <svg class="absolute inset-0 h-full w-full" viewBox="354 177 1303 736" shape-rendering="crispEdges">
                <!-- solid body -->
                <path d="M706 336H696C672 337 658 350 655 368L637 458 636 625 637 680C640 701 660 714 688 717L1347 770C1375 773 1392 760 1397 742L1413 658V430C1411 407 1392 391 1366 389z" fill="#666"/>
                <path d="M655 368L637 458 636 625 637 680C640 694 650 706 663 710L680 628 654 600z" fill="#999"/>
                <path d="M663 710L678 624 692 630 675 715z" fill="#699"/>
                <path d="M675 715L690 628 704 632 688 717z" fill="#669"/>
                <!-- rounded rim, shaded in bands -->
                <path d="M706 336H696C672 337 658 350 654 372L653 590C654 616 676 631 703 634L1362 687C1388 685 1408 666 1408 634V430C1406 407 1390 392 1366 389z" fill="#669"/>
                <path d="M706 336H696C672 337 658 350 654 372L653 590C654 616 676 630 703 632L1362 684C1386 682 1406 662 1406 634V430C1404 407 1388 392 1366 389z" fill="#699"/>
                <path d="M706 336H696C672 337 658 350 654 372L653 590C654 616 676 628 703 629.500L1362 682C1384 680 1404 658 1404 634V425C1402 405 1386 392 1366 389z" fill="#999"/>
                <path d="M706 340H696C680 340 658 352 655 372L653 590C656 609 676 618 703 619L1362 671C1378 668 1396 648 1396 634V422C1394 406 1384 395 1366 393z" fill="#99c"/>
                <path d="M676 350C668 350 660 360 658 372L657 590C658 605 670 615 688 616C697 616 703 610 700 606C685 602 676 592 675 580z" fill="#9cc"/>
                <path d="M668 593C666 602 674 613 687 614C696 614 698 609 691 605C682 601 678 595 674 592z" fill="#ccc"/>
                <path d="M672 598C672 604 680 612 688 611C692 609 688 605 684 603C679 600 676 597 672 598z" fill="#ccf"/>
                <path d="M674 600C676 606 683 611 687 610C689 607 684 604 681 602z" fill="#fff"/>
                <!-- selected face -->
                <path d="M707 344H698C687 345 680 352 679 362L678 578C679 590 690 601 705 602L1365 654.500H1375C1386 653 1392 645 1393 637L1394 422C1392 406 1380 397 1366 396.500z" fill="#69c" stroke="#0ff" stroke-width="1.200"/>
                <!-- visible edges -->
                <path d="M706 336L707 344M678 363C668 363 657 367 654 374L652.500 593 637 677M655 368L637 458 636 625 637 680C640 701 660 714 688 717L1347 770C1375 773 1392 760 1397 742M678 578C668 578 657 582 653 590C654 616 676 631 703 634L1362 687C1388 689 1412 672 1413 650V500M705 602L703 634 688 717M1365 655L1362 687 1346.500 770M1366 389V397M1394 421C1403 422 1411 427 1413.500 434M1393 635.500C1402 637 1411 641 1413 648" fill="none" stroke="#000"/>
                <path d="M1413 658L1397 742" stroke="#000" stroke-dasharray="3 13"/>
                <!-- spin centre -->
                <g shape-rendering="auto">
                    <path d="M1026.500 549V532" stroke="#0f3" stroke-width="1.500"/><circle cx="1026.500" cy="531.500" r="2.500" fill="#3c6"/>
                    <path d="M1027 549l2-14" stroke="#0ff" stroke-width="1"/><circle cx="1029.500" cy="534.500" r="2.700" fill="#0ff"/>
                    <path d="M1027 548.500l20 1.500" stroke="#c66"/><circle cx="1048.500" cy="550.500" r="2.800" fill="#c66"/>
                    <path d="M1082.500 438.500v16l4-3.500 4 8 3-1.500-4-7.500h4.500z" fill="#fff" stroke="#000"/>
                </g>
            </svg>
            <p class="absolute bottom-[159px] left-[15px] text-[13px] leading-5 font-normal text-[#999]">插入模式</p>

            <!-- In-graphics toolbar -->
            <div class="relative mt-[7px] flex justify-center pl-4">
                <div class="flex h-[47px] items-center border border-[#999] bg-[#ccc] px-1">
                    <button aria-label="重新调整"><svg class="mr-0.5 h-[34px] w-10" viewBox="0 0 40 34"><path d="M4 3h26v25H4z" fill="#fff"/><path d="M4 3h26M4 28h26M29.500 2v20" stroke="#999" fill="none"/><path d="M23 22l9 9-2 2-9-9z" fill="#eee" stroke="#999"/><circle cx="16" cy="15" r="9.500" fill="#fff" stroke="#699" stroke-width="1.500"/><path d="M10 23q9-3 14-10 2 7-4 10-5 3-10 0z" fill="#cff"/></svg></button>
                    <button aria-label="放大"><svg class="mr-0.5 h-[34px] w-10" viewBox="0 0 40 34"><use href="#lens"/><path d="M7 12h14M14 5v14" stroke="#069" stroke-width="3"/></svg></button>
                    <button aria-label="缩小"><svg class="mr-0.5 h-[34px] w-10" viewBox="0 0 40 34"><use href="#lens"/><path d="M7 12h14" stroke="#069" stroke-width="3"/></svg></button>
                    <button aria-label="重画"><svg class="mr-0.5 h-[34px] w-10" viewBox="0 0 40 34"><path d="M5 4h28v27H5z" fill="#6cc"/><path d="M5 4h28v8L22 22H5z" fill="#cff"/><path d="M20 4h13v10z" fill="#99f" fill-opacity=".6"/><path d="M5 9q14-6 24 3L14 29 5 31z" fill="#fff"/><path d="M5 4.500h28M5 30.500h28" stroke="#999"/><path d="M33 4v27" stroke="#999"/><path d="M30 12L14 29" stroke="#069" stroke-width="2"/><path d="M9 31q2-6 7-5 4 3 2 5z" fill="#069"/></svg></button>
                    <button aria-label="渲染选项"><svg class="mr-0.5 h-[34px] w-10 overflow-visible" viewBox="0 0 40 34"><path d="M15 9l6-7 12-1q3 1 3 5l-2 11q-3 4-9 3z" fill="#999"/><path d="M15 9l6-7 12-1 3 2-7 8z" fill="#fff"/><path d="M15 9l14 2-2 8-9 1z" fill="#ddd"/><circle cx="13" cy="22" r="9.500" fill="#888"/><circle cx="12" cy="20.500" r="8" fill="#ccc"/><circle cx="10.500" cy="18.500" r="5" fill="#fff"/><path d="M38 29v6h-6z" fill="#333"/></svg></button>
                    <button aria-label="显示样式"><svg class="mr-0.5 h-[34px] w-10 overflow-visible" viewBox="0 0 40 34"><path d="M6 10L15 2h19L25 10z" fill="#9ff"/><path d="M25 10l9-8v21l-9 9z" fill="#6cc"/><path d="M6 10h19v22H6z" fill="#fff"/><path d="M6 10h19v22H6zM6 10l9-8h19v21l-9 9M25 10l9-8" fill="none" stroke="#069" stroke-width="1.500"/><path d="M39 29v6h-6z" fill="#333"/></svg></button>
                    <button aria-label="已保存方向"><svg class="mr-0.5 h-[34px] w-10 overflow-visible" viewBox="0 0 40 34"><path d="M6 10L15 2h19L26 10z" fill="#9ff"/><path d="M26 10l8-8v21l-8 8z" fill="#6cc"/><path d="M6 10h20v21H6z" fill="#fff" stroke="#bdd"/><path d="M27 20h10v13H27z" fill="#fff" stroke="#999"/><path d="M29 23h1M32 23h4M29 26h1M32 26h4M29 29h1M32 29h4" stroke="#666"/><path d="M40 29v6h-6z" fill="#333"/></svg></button>
                    <button aria-label="视图管理器"><svg class="mr-0.5 h-[34px] w-10" viewBox="0 0 40 34"><path d="M7 2h26v28H7z" fill="#fff"/><path d="M6 2.500h27M6 8h27M6 14h27M6 19h27M6 25h27M6 30h20M12.500 6v24M33 2v18" stroke="#888" fill="none"/><path d="M23 23h4l2-3h5l1 3h3v10H23z" fill="#444"/><circle cx="31" cy="28" r="4" fill="#222" stroke="#bbb"/></svg></button>
                    <button aria-label="透视图"><svg class="mr-0.5 h-[34px] w-10" viewBox="0 0 40 34"><path d="M6 10l6-6h21l-5 6z" fill="#9ff"/><path d="M27 10l6-6v21l-6 6z" fill="#6cc"/><path d="M6 10h21v21H6z" fill="#fff" stroke="#bdd"/><path d="M28 19l6-6v5h4v2h-4v5z" fill="#333"/></svg></button>
                    <button aria-label="截面"><svg class="mr-0.5 h-[34px] w-10" viewBox="0 0 40 34"><path d="M7 15l6-7h17l-5 7z" fill="#9ff"/><path d="M25 15l5-7v18l-5 6z" fill="#6cc"/><path d="M7 15h18v17H7z" fill="#fff" stroke="#bdd"/><path d="M17 10l-5-5h3V1h4v4h3zM28 19l5-5v3h5v3h-5v4z" fill="#333"/></svg></button>
                    <button aria-label="基准显示过滤器"><svg class="mr-0.5 h-[34px] w-10 overflow-visible" viewBox="0 0 40 34"><path d="M7 2l9 9M16 2l-9 9" stroke="#663" stroke-width="1.500"/><path d="M23 2L11 32" stroke="#963" stroke-width="2" stroke-dasharray="6 3"/><path d="M19 21h18M24 9l9 24M33 9l-9 24" stroke="#963" stroke-width="1.800"/><path d="M41 29v6h-6z" fill="#333"/></svg></button>
                    <button aria-label="平面显示"><svg class="mr-0.5 h-[34px] w-10" viewBox="0 0 40 34"><path d="M8 25l8-19h21l-8 19z" fill="none" stroke="#963" stroke-width="2"/><use href="#eye" x="25" y="24" width="14" height="9" color="#366"/></svg></button>
                    <button aria-label="轴显示"><svg class="mr-0.5 h-[34px] w-10" viewBox="0 0 40 34"><path d="M23 2L11 32" stroke="#963" stroke-width="2" stroke-dasharray="6 4"/><use href="#eye" x="21" y="24" width="14" height="9" color="#333"/></svg></button>
                    <button aria-label="点显示"><svg class="mr-0.5 h-[34px] w-10" viewBox="0 0 40 34"><path d="M12 3l8 8M20 3l-8 8M27 6l8 8M35 6l-8 8M8 17l8 8M16 17l-8 8" stroke="#663" stroke-width="1.500"/><use href="#eye" x="24" y="24" width="14" height="9" color="#333"/></svg></button>
                    <button aria-label="坐标系显示"><svg class="mr-0.5 h-[34px] w-10" viewBox="0 0 40 34"><path d="M8 17h22M17 4l10 25M28 2L16 30" stroke="#963" stroke-width="2"/><path d="M8 2v5h5M13 2v7l-5 1M8 24h5l-5 6h6M31 14l6 6M37 14l-6 6" fill="none" stroke="#333" stroke-width="1.500"/><use href="#eye" x="24" y="24" width="14" height="9" color="#333"/></svg></button>
                    <button aria-label="注释显示"><svg class="mr-0.5 h-[34px] w-10" viewBox="0 0 40 34"><path d="M7 2h21v12H7z" fill="#fff" stroke="#999"/><path d="M28 7.500h10l-5 13" fill="none" stroke="#333"/><path d="M30 17l6 2-4 4z" fill="#333"/><use href="#eye" x="25" y="25" width="14" height="9" color="#366"/></svg></button>
                    <button class="ml-1 size-[39px] border border-[#999]" aria-label="旋转中心"><svg class="size-[37px]" viewBox="0 0 37 37"><path d="M7 7l10 11L7 29M17 18h12" fill="none" stroke="#366" stroke-width="2"/><circle cx="7" cy="7" r="4.500" fill="#9c9" stroke="#393"/><circle cx="29" cy="18" r="4.500" fill="#f99" stroke="#c33"/><circle cx="7" cy="29" r="4.500" fill="#9cc" stroke="#39c"/></svg></button>
                </div>
            </div>
        </main>
    </div>

    <!-- Status bar -->
    <footer class="flex h-[75px] shrink-0 border-t-2 border-b-[3px] border-[#666] bg-[#ccc]">
        <div class="flex items-end pb-1 pl-1.5">
            <button class="flex size-[22px] items-center justify-center border border-[#999]" aria-label="导航器"><svg class="h-4 w-[13px]"><use href="#treesmall"/></svg></button>
            <button class="mb-[3px] ml-[7px]" aria-label="浏览器"><svg class="size-4" viewBox="0 0 16 16"><circle cx="8" cy="8" r="6.500" fill="#39c"/><path d="M4 5l3-2 2 3-3 3zM9 9l4-2-1 5-3 1z" fill="#9cf"/><path d="M1 14Q-1 10 6 5T15 1q2 3-5 8T1 14z" fill="none" stroke="#666"/></svg></button>
            <button class="mb-[3px] ml-2.5" aria-label="全屏"><svg class="size-4" viewBox="0 0 16 16"><path d="M.5.500h15v15H.5z" fill="#fff"/><path d="M1 7h14v4H1z" fill="#cff"/><path d="M1 11h14v4H1z" fill="#ccc"/><path d="M.5.500h15v15H.5z" fill="none" stroke="#069"/></svg></button>
            <span class="ml-3 h-[22px] w-px bg-[#999]"></span>
        </div>
        <ul class="pt-[7px] pl-1.5 text-[15px] leading-[19px] whitespace-nowrap">
            <li class="flex items-center gap-[5px]"><span class="mb-0.5 size-[5px] rounded-full bg-[#069]"></span>重新生成备份已经保存。</li>
            <li class="flex items-center gap-[5px]"><span class="mb-0.5 size-[5px] rounded-full bg-[#069]"></span><span>正在从磁盘上恢复<b class="text-base leading-[19px] font-bold">'PTC-DIM'</b>的重新生成备份。</span></li>
            <li class="flex items-center gap-[5px]"><span class="mb-0.5 size-[5px] rounded-full bg-[#069]"></span>重新生成备份已经保存。</li>
        </ul>
        <div class="ml-auto flex items-end pr-0.5 pb-[3px]">
            <span class="mr-10 mb-0.5 h-8 w-px bg-[#999]"></span>
            <div class="mb-0.5 flex h-8 items-center gap-px border-x border-[#999] px-[3px] pb-0.5">
                <button class="flex h-[22px] w-[26px] items-center justify-center bg-white" aria-label="查找"><svg class="size-4" viewBox="0 0 16 16"><path d="M3 1h3v3h4V1h3l3 10v4h-6v-4H7v4H0v-4z" fill="#444"/><path d="M3 5l2 1-2 7H1v-3zM11 6l2-1 2 5-2 3z" fill="#aaa"/></svg></button>
                <button class="flex h-[22px] w-3.5 items-center justify-center bg-white" aria-label="查找选项"><svg class="h-1 w-[7px]"><use href="#caret"/></svg></button>
            </div>
            <div class="relative ml-[125px]">
                <select aria-label="选择过滤器" class="block h-[30px] w-[225px] appearance-none border border-[#99c] bg-white pb-0.5 pl-[7px] font-medium">
                    <option>几何</option>
                </select>
                <span class="pointer-events-none absolute inset-y-px right-px flex w-[15px] items-center justify-center border-l border-[#99c]"><svg class="h-1 w-[7px]"><use href="#caret"/></svg></span>
            </div>
        </div>
    </footer>

    <script>
        // marked: items carrying the small black square
        const items = [
            { icon: 'datum', name: 'RIGHT' },
            { icon: 'datum', name: 'TOP' },
            { icon: 'datum', name: 'FRONT' },
            { icon: 'extrudeitem', name: '拉伸 4', open: true },
            { icon: 'rounditem', name: '倒圆角 1' },
            { icon: 'rounditem', name: '倒圆角 2' },
            { icon: 'insert', name: '在此插入' },
            { icon: 'csys', name: 'PRT_CSYS_DEF', marked: true },
            { icon: 'datumhid', name: 'DTM1', marked: true, hidden: true },
            { icon: 'sketchhid', name: '草绘 1', marked: true, hidden: true },
            { icon: 'datum', name: 'DTM2', marked: true },
            { icon: 'copyitem', name: '复制 5', marked: true },
            { icon: 'points', name: 'PNT0', marked: true },
            { icon: 'points', name: 'PNT1', marked: true },
            { icon: 'copyitem', name: '复制 6', marked: true },
            { icon: 'indep', name: '独立几何 标识13126', marked: true },
            { icon: 'copyitem', name: '复制 3', marked: true },
            { icon: 'copyitem', name: '复制 4', marked: true },
            { icon: 'extrudeitem', name: '拉伸 1', marked: true },
            { icon: 'extrudeitem', name: '拉伸 2', marked: true },
            { icon: 'intitem', name: '相交 1', marked: true },
            { icon: 'intitem', name: '相交 2', marked: true },
            { icon: 'intitem', name: '相交 3', marked: true },
            { icon: 'style', name: '样式 1', marked: true },
            { icon: 'style', name: '样式 2', marked: true },
        ];

        const tree = document.getElementById('model-tree');
        tree.innerHTML = `<li class="flex h-[26px] items-center gap-1.5 pl-1"><svg class="size-3.5"><use href="#part"/></svg>PTC-DIM.PRT</li>` +
            items.map(item => `
                <li class="flex h-[26px] items-center pl-2">
                    <span class="w-[15px]">${item.open ? '<svg class="ml-px h-[9px] w-2" viewBox="0 0 8 9"><path d="M0 0l7 4.500L0 9z" fill="#999"/></svg>' : ''}</span>
                    <svg class="size-4 text-[#963]"><use href="#${item.icon}"/></svg>
                    <span class="ml-[5px] flex items-center gap-0.5">
                        ${item.marked ? '<i class="mb-2.5 size-1 bg-[#333]"></i>' : ''}
                        <span class="${item.hidden ? 'font-normal text-[#ccc]' : ''}">${item.name}</span>
                    </span>
                </li>`).join('');
    </script>
</body>
</html>
